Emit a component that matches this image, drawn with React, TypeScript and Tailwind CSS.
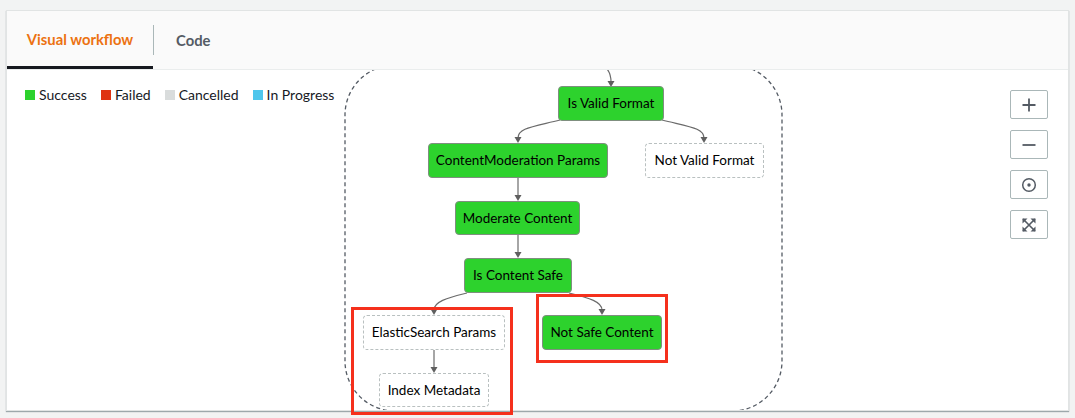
import React from 'react';

type Node = { label: string; x: number; y: number; w: number; h: number; state: 'ok' | 'idle' };

// page coordinates; the graph layer is shifted so these line up with the screenshot
const NODES: Node[] = [
  { label: 'Is Valid Format', x: 558, y: 86, w: 106, h: 35, state: 'ok' },
  { label: 'ContentModeration Params', x: 428, y: 143, w: 180, h: 35, state: 'ok' },
  { label: 'Not Valid Format', x: 645, y: 143, w: 119, h: 35, state: 'idle' },
  { label: 'Moderate Content', x: 455, y: 201, w: 125, h: 34, state: 'ok' },
  { label: 'Is Content Safe', x: 464, y: 258, w: 108, h: 35, state: 'ok' },
  { label: 'ElasticSearch Params', x: 363, y: 315, w: 142, h: 35, state: 'idle' },
  { label: 'Not Safe Content', x: 542, y: 315, w: 120, h: 35, state: 'ok' },
  { label: 'Index Metadata', x: 379, y: 373, w: 110, h: 34, state: 'idle' },
];

const EDGES: { d: string; tip: [number, number] }[] = [
  { d: 'M 596 62 C 606 65, 611 72, 611 82', tip: [611, 87] },
  { d: 'M 560 120 C 532 127, 518 128, 518 138', tip: [518, 143] },
  { d: 'M 662 120 C 690 127, 704 128, 704 138', tip: [704, 143] },
  { d: 'M 518 178 L 518 196', tip: [518, 201] },
  { d: 'M 518 235 L 518 253', tip: [518, 258] },
  { d: 'M 467 293 C 446 298, 434 302, 434 310', tip: [434, 315] },
  { d: 'M 569 293 C 590 298, 602 302, 602 310', tip: [602, 315] },
  { d: 'M 434 350 L 434 368', tip: [434, 373] },
];

const LEGEND = [
  { label: 'Success', color: 'bg-[#2dd22d]' },
  { label: 'Failed', color: 'bg-[#df3312]' },
  { label: 'Cancelled', color: 'bg-[#d9dcdc]' },
  { label: 'In Progress', color: 'bg-[#4fc6ec]' },
];

const ZoomButton: React.FC<{ children: React.ReactNode; title: string }> = ({ children, title }) => (
  <button
    title={title}
    className="w-[38px] h-[29px] flex items-center justify-center bg-white border border-[#aab7b8] rounded-[2px] text-[#545b64]"
  >
    {children}
  </button>
);

export default function App() {
  return (
    <div
      className="relative w-[1075px] h-[418px] bg-[#f2f3f3] pt-[10px] pl-[6px] overflow-hidden"
      style={{ fontFamily: 'Lato, "Open Sans", sans-serif' }}
    >
      <div className="w-[1063px] h-[401px] bg-white border border-[#e1e4e4] shadow-[0_1px_1px_0_rgba(0,28,36,0.35)] flex flex-col">
        {/* Tabs */}
        <div className="h-[59px] shrink-0 flex items-stretch bg-[#fafafa] border-b border-[#eaeded]">
          <div className="w-[146px] flex items-center justify-center text-[14.8px] font-bold text-[#ec7211] border-b-[3px] border-[#16191f] pt-[2px]">
            Visual workflow
          </div>
          <div className="w-px bg-[#aab7b8] my-[14px]" />
          <div className="px-[22px] flex items-center text-[14.8px] font-bold text-[#545b64]">
            Code
          </div>
        </div>

        {/* Canvas */}
        <div className="relative flex-1 overflow-hidden">
          <div className="absolute left-[-7px] top-[-70px] w-[1075px] h-[418px]">
            <svg width={1075} height={418} className="absolute inset-0">
              <rect
                x={345}
                y={65}
                width={437}
                height={346}
                rx={50}
                fill="none"
                stroke="#545b64"
                strokeWidth={1.3}
                strokeDasharray="4 3"
              />
              {EDGES.map((e, i) => (
                <g key={i}>
                  <path d={e.d} fill="none" stroke="#6b6b6b" strokeWidth={1.2} />
                  <polygon
                    points={`${e.tip[0] - 3.5},${e.tip[1] - 6} ${e.tip[0] + 3.5},${e.tip[1] - 6} ${e.tip[0]},${e.tip[1]}`}
                    fill="#5f5f5f"
                  />
                </g>
              ))}
            </svg>
            {NODES.map(n => (
              <div
                key={n.label}
                className={`absolute flex items-center justify-center rounded-[4px] text-[13.5px] text-black whitespace-nowrap ${
                  n.state === 'ok'
                    ? 'bg-[#2dd22d] border border-[#7f8f7f]'
                    : 'bg-white border border-dashed border-[#b9c0c0]'
                }`}
                style={{ left: n.x, top: n.y, width: n.w, height: n.h }}
              >
                {n.label}
              </div>
            ))}
          </div>

          {/* Legend */}
          <div className="relative flex items-center gap-[14px] pl-[18px] pt-[14px] text-[14px] text-[#16191f]">
            {LEGEND.map(l => (
              <div key={l.label} className="flex items-center gap-[4px]">
                <span className={`w-[10px] h-[10px] ${l.color}`} />
                <span>{l.label}</span>
              </div>
            ))}
          </div>

          {/* Zoom controls */}
          <div className="absolute top-[20px] right-[20px] flex flex-col gap-[11px]">
            <ZoomButton title="Zoom in">
              <svg width="16" height="16" viewBox="0 0 16 16">
                <path d="M8 1.5v13M1.5 8h13" stroke="currentColor" strokeWidth="1.8" />
              </svg>
            </ZoomButton>
            <ZoomButton title="Zoom out">
              <svg width="16" height="16" viewBox="0 0 16 16">
                <path d="M1.5 8h13" stroke="currentColor" strokeWidth="1.8" />
              </svg>
            </ZoomButton>
            <ZoomButton title="Center">
              <svg width="16" height="16" viewBox="0 0 16 16">
                <circle cx="8" cy="8" r="6.3" fill="none" stroke="currentColor" strokeWidth="1.5" />
                <circle cx="8" cy="8" r="1.7" fill="currentColor" />
              </svg>
            </ZoomButton>
            <ZoomButton title="Fit">
              <svg width="16" height="16" viewBox="0 0 16 16">
                <path d="M2 2l12 12M14 2L2 14" stroke="currentColor" strokeWidth="1.6" />
                <path d="M1.5 1.5h5l-5 5zM14.5 1.5h-5l5 5zM1.5 14.5h5l-5-5zM14.5 14.5h-5l5-5z" fill="currentColor" />
              </svg>
            </ZoomButton>
          </div>
        </div>
      </div>

      {/* Annotation boxes */}
      <div className="absolute left-[351px] top-[307px] w-[162px] h-[108px] border-[3px] border-[#f5301c]" />
      <div className="absolute left-[536px] top-[294px] w-[132px] h-[69px] border-[3px] border-[#f5301c]" />
    </div>
  );
}
